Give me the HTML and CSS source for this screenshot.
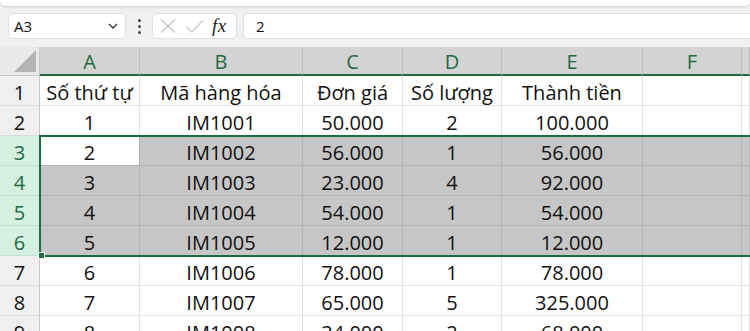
FILE: index.html
```html
<!DOCTYPE html>
<html lang="vi">
<head>
    <meta charset="UTF-8" />
    <title>Bảng tính</title>
    <link rel="stylesheet" href="styles.css">
</head>
<body>
    <div class="ribbon-edge"></div>

    <div class="formula-bar">
        <div class="name-box">
            <span>A3</span>
            <svg class="chevron" width="10" height="6" viewBox="0 0 10 6"><path d="M1 1l4 4 4-4" fill="none" stroke="#333" stroke-width="1.3"/></svg>
        </div>
        <div class="dots"><span></span><span></span><span></span></div>
        <div class="fx-box">
            <svg width="16" height="14" viewBox="0 0 16 14"><path d="M1 0.5l14 13M15 0.5l-14 13" fill="none" stroke="#c4c4c4" stroke-width="1.2"/></svg>
            <svg width="19" height="13" viewBox="0 0 19 13"><path d="M1 6.5l5.5 5.5 11.5-11.5" fill="none" stroke="#c4c4c4" stroke-width="1.2"/></svg>
            <span class="fx">fx</span>
        </div>
        <div class="formula-input">2</div>
    </div>

    <div class="sheet">
        <div class="corner"><div class="triangle"></div></div>
        <div class="col-head">A</div>
        <div class="col-head">B</div>
        <div class="col-head">C</div>
        <div class="col-head">D</div>
        <div class="col-head">E</div>
        <div class="col-head">F</div>
        <div class="col-head"></div>

        <div class="row-head">1</div>
        <div class="cell">Số thứ tự</div>
        <div class="cell">Mã hàng hóa</div>
        <div class="cell">Đơn giá</div>
        <div class="cell">Số lượng</div>
        <div class="cell">Thành tiền</div>
        <div class="cell"></div>
        <div class="cell"></div>

        <div class="row-head">2</div>
        <div class="cell">1</div>
        <div class="cell">IM1001</div>
        <div class="cell">50.000</div>
        <div class="cell">2</div>
        <div class="cell">100.000</div>
        <div class="cell"></div>
        <div class="cell"></div>

        <div class="row-head selected">3</div>
        <div class="cell active">2</div>
        <div class="cell sel">IM1002</div>
        <div class="cell sel">56.000</div>
        <div class="cell sel">1</div>
        <div class="cell sel">56.000</div>
        <div class="cell sel"></div>
        <div class="cell sel"></div>

        <div class="row-head selected">4</div>
        <div class="cell sel">3</div>
        <div class="cell sel">IM1003</div>
        <div class="cell sel">23.000</div>
        <div class="cell sel">4</div>
        <div class="cell sel">92.000</div>
        <div class="cell sel"></div>
        <div class="cell sel"></div>

        <div class="row-head selected">5</div>
        <div class="cell sel">4</div>
        <div class="cell sel">IM1004</div>
        <div class="cell sel">54.000</div>
        <div class="cell sel">1</div>
        <div class="cell sel">54.000</div>
        <div class="cell sel"></div>
        <div class="cell sel"></div>

        <div class="row-head selected">6</div>
        <div class="cell sel">5</div>
        <div class="cell sel">IM1005</div>
        <div class="cell sel">12.000</div>
        <div class="cell sel">1</div>
        <div class="cell sel">12.000</div>
        <div class="cell sel"></div>
        <div class="cell sel"></div>

        <div class="row-head">7</div>
        <div class="cell">6</div>
        <div class="cell">IM1006</div>
        <div class="cell">78.000</div>
        <div class="cell">1</div>
        <div class="cell">78.000</div>
        <div class="cell"></div>
        <div class="cell"></div>

        <div class="row-head">8</div>
        <div class="cell">7</div>
        <div class="cell">IM1007</div>
        <div class="cell">65.000</div>
        <div class="cell">5</div>
        <div class="cell">325.000</div>
        <div class="cell"></div>
        <div class="cell"></div>

        <div class="row-head">9</div>
        <div class="cell">8</div>
        <div class="cell">IM1008</div>
        <div class="cell">34.000</div>
        <div class="cell">2</div>
        <div class="cell">68.000</div>
        <div class="cell"></div>
        <div class="cell"></div>

        <div class="selection"><span class="handle"></span></div>
    </div>
</body>
</html>
```

FILE: styles.css
```css
html, body {
    margin: 0;
    padding: 0;
    width: 750px;
    height: 331px;
    overflow: hidden;
    background: #f0f0f0;
    font-family: "Open Sans", sans-serif;
    color: #111111;
}

.ribbon-edge {
    height: 6px;
    background: #ffffff;
    border-bottom: 1px solid #d8d8d8;
    border-radius: 0 0 6px 6px;
    box-shadow: 0 1px 2px rgba(0, 0, 0, 0.08);
}

/* formula bar */
.formula-bar {
    display: flex;
    align-items: center;
    height: 26px;
    padding: 6px 0 8px 8px;
}

.name-box, .fx-box, .formula-input {
    box-sizing: border-box;
    height: 26px;
    background: #ffffff;
    border: 1px solid #e0e0e0;
    border-radius: 5px;
    display: flex;
    align-items: center;
}

.name-box {
    width: 118px;
    padding: 0 7px 0 5px;
    justify-content: space-between;
    font-size: 15px;
}

.dots {
    width: 26px;
    display: flex;
    flex-direction: column;
    align-items: center;
    gap: 3px;
}

.dots span {
    width: 3px;
    height: 3px;
    border-radius: 50%;
    background: #444;
}

.fx-box {
    width: 85px;
    padding: 0 0 0 7px;
    gap: 9px;
}

.fx {
    font-family: "Liberation Serif", serif;
    font-style: italic;
    font-size: 19px;
    color: #222;
    margin-left: -1px;
    letter-spacing: 0.5px;
}

.formula-input {
    flex: 1;
    margin-left: 6px;
    padding-left: 12px;
    font-size: 15px;
    border-right: none;
    border-radius: 5px 0 0 5px;
}

/* grid */
.sheet {
    position: relative;
    display: grid;
    grid-template-columns: 40px 100px 163px 100px 99px 141px 99px 1fr;
    grid-template-rows: 29px;
    grid-auto-rows: 30px;
    background: #ffffff;
    font-size: 20px;
}

.corner {
    box-sizing: border-box;
    background: #e9e9e9;
    border-right: 1px solid #c6c6c6;
    border-bottom: 1px solid #c6c6c6;
    position: relative;
}

.triangle {
    position: absolute;
    right: 3px;
    bottom: 3px;
    width: 0;
    height: 0;
    border-left: 22px solid transparent;
    border-bottom: 22px solid #b4b4b4;
}

.col-head {
    box-sizing: border-box;
    background: #d3d3d3;
    color: #1e6b41;
    text-align: center;
    line-height: 27px;
    padding-top: 1px;
    border-right: 1px solid #bdbdbd;
    border-bottom: 2px solid #1e6b41;
}

.row-head {
    box-sizing: border-box;
    background: #efefef;
    text-align: center;
    line-height: 29px;
    padding-top: 2px;
    border-right: 1px solid #c6c6c6;
    border-bottom: 1px solid #dcdcdc;
}

.row-head.selected {
    background: #d3f0e0;
    color: #1e6b41;
    border-bottom-color: #bfe3cf;
}

.cell {
    box-sizing: border-box;
    text-align: center;
    white-space: nowrap;
    overflow: hidden;
    line-height: 29px;
    padding-top: 2px;
    border-right: 1px solid #e1e1e1;
    border-bottom: 1px solid #e1e1e1;
}

.cell.sel {
    background: #c6c6c6;
    border-color: #b3b3b3;
}

.cell.active {
    background: #ffffff;
    border-right-color: #b3b3b3;
    border-bottom-color: #b3b3b3;
}

/* selection outline of rows 3-6 */
.selection {
    position: absolute;
    left: 39px;
    right: -2px;
    top: 88px;
    height: 122px;
    box-sizing: border-box;
    border: 2px solid #1e6b41;
    pointer-events: none;
}

.handle {
    position: absolute;
    left: -3px;
    bottom: -4px;
    width: 5px;
    height: 5px;
    background: #1e6b41;
    border: 1px solid #ffffff;
}
```
